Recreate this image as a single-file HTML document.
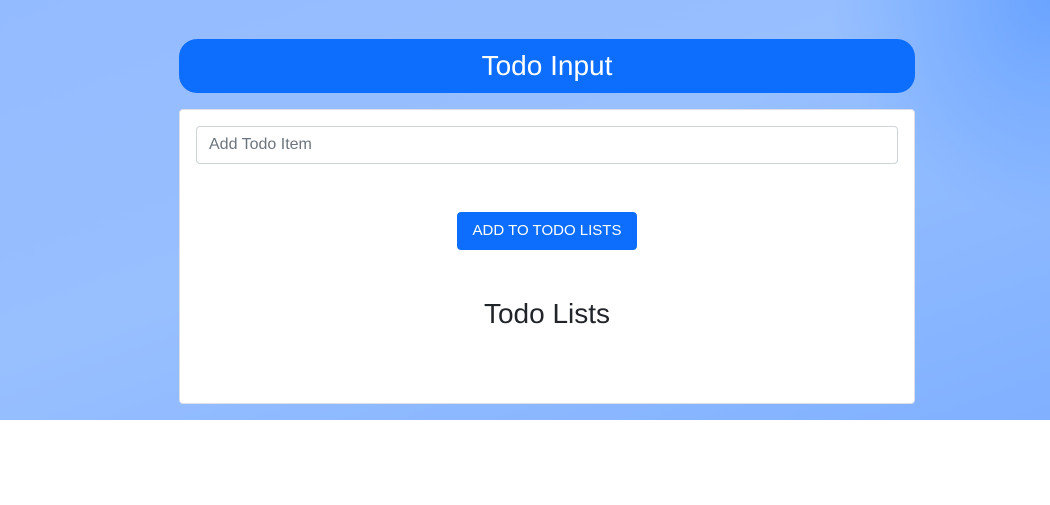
<!DOCTYPE html>
<html><head><style>
*{box-sizing:border-box;margin:0;padding:0}
body{width:1050px;height:505px;background:#fff;font-family:"Liberation Sans",sans-serif;position:relative;overflow:hidden}
.bg{position:absolute;left:0;top:0;width:1050px;height:420px;background:linear-gradient(160deg,#93bbff 0%,#98c0ff 45%,#80b0ff 100%)}
.bg2{position:absolute;left:0;top:0;width:1050px;height:420px;background:radial-gradient(circle at 1050px 0,#6aa4ff 0,rgba(106,164,255,0) 220px)}
.hdr{position:absolute;left:179px;top:39px;width:736px;height:54px;background:#0d6efd;border-radius:18px;color:#fff;font-size:28px;text-align:center;line-height:53px}
.card{position:absolute;left:179px;top:109px;width:736px;height:295px;background:#fff;border:1px solid #dcdfe6;border-radius:4px}
.inp{position:absolute;left:16px;top:16px;width:702px;height:38px;border:1px solid #ced4da;border-radius:4px;color:#6c757d;font-size:16px;line-height:36px;padding-left:12px}
.btn{position:absolute;left:277px;top:102px;width:180px;height:38px;background:#0d6efd;border-radius:4px;color:#fff;font-size:15px;text-align:center;line-height:38px}
.tl{position:absolute;left:0;width:734px;top:188px;text-align:center;font-size:28px;color:#212529}
</style></head><body>
<div class="bg"></div><div class="bg2"></div>
<div class="hdr">Todo Input</div>
<div class="card">
<div class="inp">Add Todo Item</div>
<div class="btn">ADD TO TODO LISTS</div>
<div class="tl">Todo Lists</div>
</div>
</body></html>
